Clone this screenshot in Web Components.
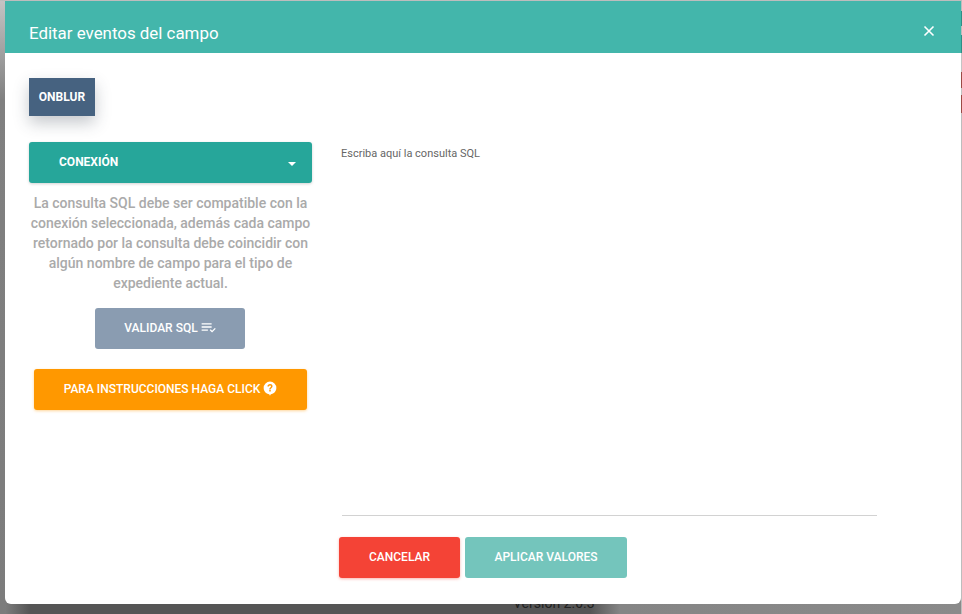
<!DOCTYPE html>
<html lang="es">
<head>
<meta charset="utf-8">
<title>Editar eventos del campo</title>
<style>
    html, body { margin: 0; height: 100%; overflow: hidden; }
    body {
        position: relative;
        font-family: Roboto, "Liberation Sans", sans-serif;
        background:
            linear-gradient(180deg, #bdbdbd 0, #bdbdbd 1px, transparent 1px) 0 0 / 100% 1px no-repeat,
            linear-gradient(180deg, #c4c4c4 0, #808080 100px, #7c7c7c 100%) 0 0 / 5px 100% no-repeat,
            linear-gradient(180deg, #bdbdbd 0, #bdbdbd 11px, #2f8f86 11px, #2f8f86 26px, #bdbdbd 26px, #bdbdbd 35px, #2f8f86 35px, #2f8f86 53px, #c4c4c4 53px, #c4c4c4 72px, #9c4a45 72px, #9c4a45 88px, #c4c4c4 88px, #c4c4c4 95px, #9c4a45 95px, #9c4a45 113px, #bdbdbd 113px) 961px 0 / 1px 100% no-repeat,
            linear-gradient(90deg, #858585 0, #555 30px, #555 590px, #858585 620px, #8a8a8a 100%);
    }
</style>
</head>
<body>
<page-version>Version 2.0.3</page-version>
<field-events-dialog heading="Editar eventos del campo">
    <event-tab slot="tabs">ONBLUR</event-tab>
    <connection-select slot="side">CONEXIÓN</connection-select>
    <p slot="side" class="help">La consulta SQL debe ser compatible con la conexión seleccionada, además cada campo retornado por la consulta debe coincidir con algún nombre de campo para el tipo de expediente actual.</p>
    <action-button slot="side" color="#8a9cb1" width="150" icon="check" top="6" style="margin-right: 1px">VALIDAR SQL</action-button>
    <action-button slot="side" color="#ff9800" width="273" icon="help" top="20" raised>PARA INSTRUCCIONES HAGA CLICK</action-button>
    <sql-editor slot="main" placeholder="Escriba aquí la consulta SQL"></sql-editor>
    <action-button slot="footer" color="#f44336" width="121" raised>CANCELAR</action-button>
    <action-button slot="footer" color="#74c5bc" width="162">APLICAR VALORES</action-button>
</field-events-dialog>

<script>
const ICONS = {
    check: `<svg width="15" height="15" viewBox="0 0 24 24" fill="currentColor"><path d="M1 5h16v2.2H1zM1 10h16v2.2H1zM1 15h10v2.2H1zM14 16.4l1.5-1.5 2.2 2.2 4.4-4.5 1.5 1.5-5.9 6z"/></svg>`,
    help: `<svg width="14" height="15" viewBox="0 0 24 26" fill="currentColor"><path fill-rule="evenodd" d="M12 1a11 11 0 0 1 11 11c0 5.6-4.2 10.2-9.6 10.9L12 25.5l-1.4-2.6C5.2 22.2 1 17.6 1 12A11 11 0 0 1 12 1zm-1.3 14.6v2.7h2.6v-2.7zM12 5.4c-2.5 0-4.3 1.6-4.4 4h2.5c.1-1 .8-1.7 1.9-1.7s1.8.7 1.8 1.6c0 .8-.4 1.2-1.3 1.9-1.4 1-1.9 1.9-1.8 3.6h2.5c0-1 .2-1.5 1.2-2.2 1.3-1 2-2 2-3.4 0-2.2-1.8-3.8-4.4-3.8z"/></svg>`
};

class PageVersion extends HTMLElement {
    constructor() {
        super();
        this.attachShadow({mode: 'open'});
    }

    connectedCallback() {
        this.shadowRoot.innerHTML = `
            <style>
                /* sits behind the dialog, only its lower half shows */
                :host {
                    position: absolute;
                    left: 513px;
                    top: 595px;
                    font-size: 14px;
                    line-height: 16px;
                    color: #222;
                }
            </style>
            <slot></slot>
        `;
    }
}

class FieldEventsDialog extends HTMLElement {
    constructor() {
        super();
        this.attachShadow({mode: 'open'});
    }

    connectedCallback() {
        this.shadowRoot.innerHTML = `
            <style>
                :host {
                    position: relative;
                    display: flex;
                    flex-direction: column;
                    box-sizing: border-box;
                    width: 956px;
                    height: 603px;
                    margin: 1px 0 0 5px;
                    background: #fff;
                    border-radius: 0 0 6px 6px;
                    overflow: hidden;
                }
                header {
                    flex: none;
                    display: flex;
                    align-items: center;
                    justify-content: space-between;
                    height: 52px;
                    padding: 12px 26px 0 24px;
                    box-sizing: border-box;
                    background: #43b6ab;
                    color: #fff;
                    font-size: 16.9px;
                    line-height: 20px;
                }
                header svg { display: block; margin-top: -4px; }
                .tabs { flex: none; height: 63px; padding: 25px 0 0 24px; box-sizing: border-box; }
                .body { flex: 1; display: flex; min-height: 0; }
                .side {
                    flex: none;
                    width: 283px;
                    margin: 26px 0 0 24px;
                    display: flex;
                    flex-direction: column;
                    align-items: center;
                }
                .right {
                    flex: none;
                    width: 535px;
                    margin-left: 30px;
                    display: flex;
                    flex-direction: column;
                }
                .editor { flex: none; height: 368px; padding-top: 31px; border-bottom: 1px solid #d2d2d2; }
                .footer { display: flex; gap: 5px; margin: 21px 0 0 -3px; }
                ::slotted(p.help) {
                    margin: 10px 0 9px;
                    font-size: 14px;
                    font-weight: 500;
                    line-height: 20px;
                    color: #aaa;
                    text-align: center;
                    width: 283px;
                }
            </style>
            <header>
                <span>${this.getAttribute('heading')}</span>
                <svg width="12" height="12" viewBox="0 0 12 12" stroke="#fff" stroke-width="1.6" aria-label="Cerrar"><path d="M1.5 1.5l9 9M10.5 1.5l-9 9"/></svg>
            </header>
            <div class="tabs"><slot name="tabs"></slot></div>
            <div class="body">
                <div class="side"><slot name="side"></slot></div>
                <div class="right">
                    <div class="editor"><slot name="main"></slot></div>
                    <div class="footer"><slot name="footer"></slot></div>
                </div>
            </div>
        `;
    }
}

class EventTab extends HTMLElement {
    constructor() {
        super();
        this.attachShadow({mode: 'open'});
    }

    connectedCallback() {
        this.shadowRoot.innerHTML = `
            <style>
                :host {
                    display: inline-flex;
                    align-items: center;
                    justify-content: center;
                    width: 66px;
                    height: 38px;
                    background: #466280;
                    color: #fff;
                    font-size: 12px;
                    font-weight: 700;
                    box-shadow: 0 7px 16px rgba(50, 60, 75, .28);
                }
            </style>
            <slot></slot>
        `;
    }
}

class ConnectionSelect extends HTMLElement {
    constructor() {
        super();
        this.attachShadow({mode: 'open'});
    }

    connectedCallback() {
        this.shadowRoot.innerHTML = `
            <style>
                :host {
                    display: flex;
                    align-items: center;
                    justify-content: space-between;
                    box-sizing: border-box;
                    width: 283px;
                    height: 41px;
                    padding: 0 16px 2px 30px;
                    background: #26a69a;
                    border-radius: 3px;
                    color: #fff;
                    font-size: 12px;
                    font-weight: 700;
                    box-shadow: 0 1px 3px rgba(0, 0, 0, .18);
                }
                i { width: 0; height: 0; margin-top: 4px; border: 4px solid transparent; border-top: 4px solid #fff; border-bottom: 0; }
            </style>
            <slot></slot><i></i>
        `;
    }
}

class ActionButton extends HTMLElement {
    constructor() {
        super();
        this.attachShadow({mode: 'open'});
    }

    connectedCallback() {
        const icon = ICONS[this.getAttribute('icon')] || '';
        const shadow = this.hasAttribute('raised') ? `0 1px 3px ${this.getAttribute('color')}66` : 'none';
        this.shadowRoot.innerHTML = `
            <style>
                :host {
                    display: flex;
                    align-items: center;
                    justify-content: center;
                    gap: 3px;
                    box-sizing: border-box;
                    flex: none;
                    width: ${this.getAttribute('width')}px;
                    height: 41px;
                    padding-bottom: 2px;
                    margin-top: ${this.getAttribute('top') || 0}px;
                    background: ${this.getAttribute('color')};
                    border-radius: 3px;
                    color: #fff;
                    font-size: 12px;
                    font-weight: 500;
                    box-shadow: ${shadow};
                }
                svg { display: block; }
            </style>
            <slot></slot>${icon}
        `;
    }
}

class SqlEditor extends HTMLElement {
    constructor() {
        super();
        this.attachShadow({mode: 'open'});
    }

    connectedCallback() {
        this.shadowRoot.innerHTML = `
            <style>
                :host { display: block; margin-left: -1px; font-size: 11px; line-height: 14px; color: #666; }
            </style>
            <div>${this.getAttribute('placeholder')}</div>
        `;
    }
}

customElements.define('page-version', PageVersion);
customElements.define('field-events-dialog', FieldEventsDialog);
customElements.define('event-tab', EventTab);
customElements.define('connection-select', ConnectionSelect);
customElements.define('action-button', ActionButton);
customElements.define('sql-editor', SqlEditor);
</script>
</body>
</html>
